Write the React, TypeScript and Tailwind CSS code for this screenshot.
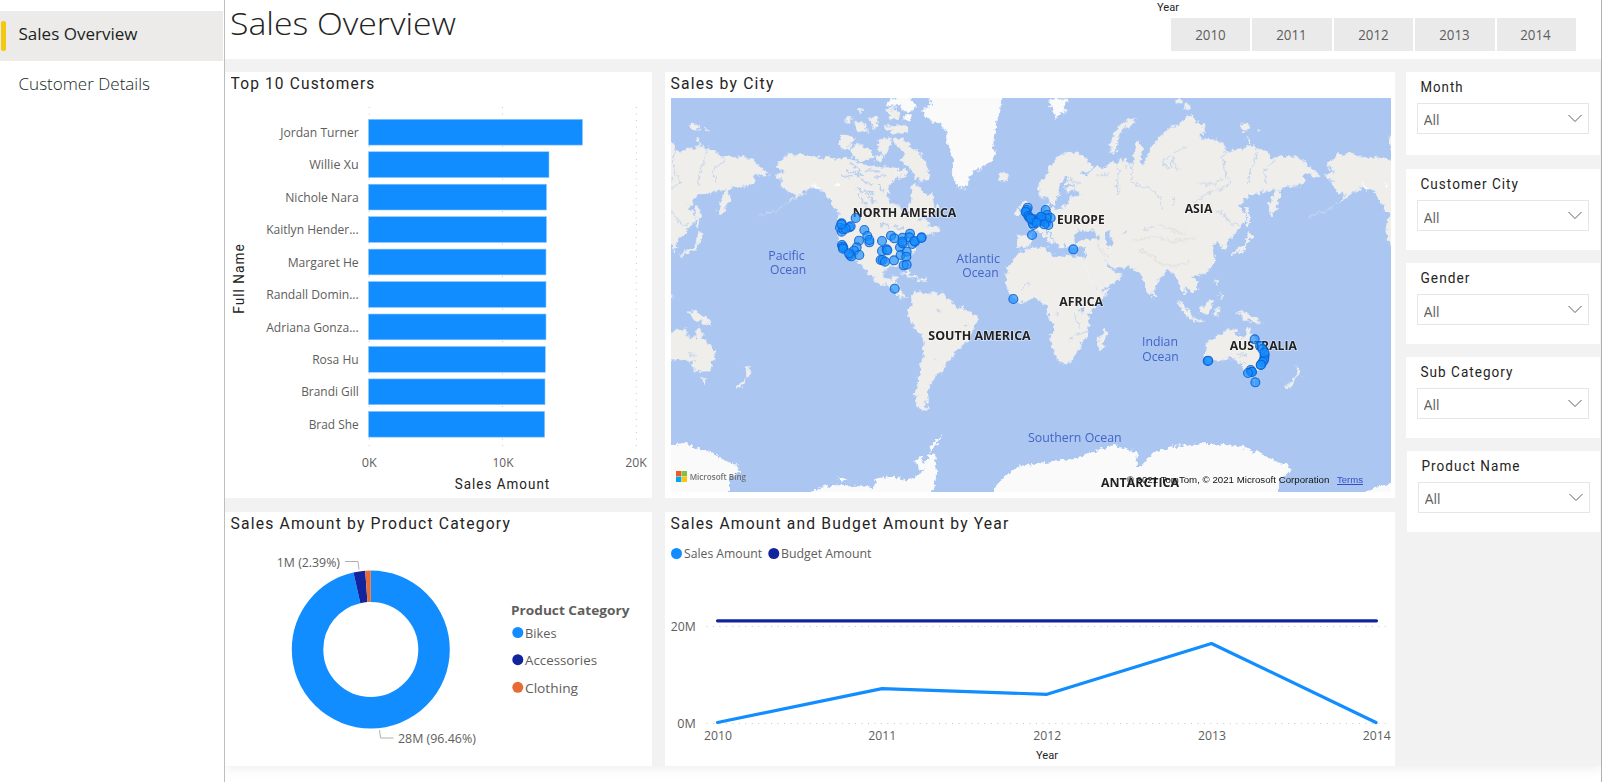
import React from "react";

const UI = '"Open Sans", "Noto Sans", sans-serif';
const DIN = 'Roboto, "Liberation Sans", sans-serif';

type LabelProps = {
  x: number;
  y: number;
  w: number;
  size?: number;
  anchor?: "start" | "middle" | "end";
  color?: string;
  weight?: number;
  font?: string;
  children: string;
};

function Label({ x, y, w, size = 13, anchor = "start", color = "#605e5c", weight = 400, font = UI, children }: LabelProps) {
  return (
    <text
      x={x}
      y={y}
      textAnchor={anchor}
      textLength={w}
      lengthAdjust="spacingAndGlyphs"
      fontSize={size}
      fontWeight={weight}
      fontFamily={font}
      fill={color}
    >
      {children}
    </text>
  );
}

/* Condensed letterforms with open tracking, as in DIN */
function DinLabel({ x, y, w, size = 15, anchor = "start", weight = 400, children }: LabelProps) {
  return (
    <text
      x={x}
      y={y}
      textAnchor={anchor}
      textLength={w}
      lengthAdjust="spacingAndGlyphs"
      letterSpacing={size * 0.075}
      fontSize={size}
      fontWeight={weight}
      fontFamily={DIN}
      fill="#252423"
    >
      {children}
    </text>
  );
}

function CardTitle({ children, width }: { children: string; width: number }) {
  return (
    <h2 className="h-[26px] pl-[6px]">
      <svg width="400" height="26" className="block">
        <DinLabel x={-0.5} y={16.8} w={width} size={17}>{children}</DinLabel>
      </svg>
    </h2>
  );
}

const customers = [
  { name: "Jordan Turner", w: 78.5, end: 582.5 },
  { name: "Willie Xu", w: 49.5, end: 549 },
  { name: "Nichole Nara", w: 73.5, end: 546.5 },
  { name: "Kaitlyn Hender...", w: 92.5, end: 546.5 },
  { name: "Margaret He", w: 71, end: 546 },
  { name: "Randall Domin...", w: 92.5, end: 546 },
  { name: "Adriana Gonza...", w: 92.5, end: 546 },
  { name: "Rosa Hu", w: 46.5, end: 545.3 },
  { name: "Brandi Gill", w: 57.5, end: 545 },
  { name: "Brad She", w: 50, end: 544.7 },
];

function BarChart() {
  return (
    <svg viewBox="225 98 427 400" width="427" height="400" className="block">
      {[369.3, 502.6, 636.3].map((x) => (
        <line key={x} x1={x} x2={x} y1="107" y2="451" stroke="#c8c6c4" strokeWidth="1" strokeDasharray="1 5.5" />
      ))}
      {customers.map((c, i) => {
        const y = 119.3 + i * 32.45;
        return (
          <g key={c.name}>
            <rect x="368.5" y={y} width={c.end - 368.5} height="25.8" fill="#118dff" stroke="#8fc8ff" strokeWidth="0.6" />
            <Label x={358.7} y={y + 17.5} w={c.w} anchor="end">{c.name}</Label>
          </g>
        );
      })}
      <Label x={369.3} y={467} w={15} anchor="middle">0K</Label>
      <Label x={503} y={467} w={21} anchor="middle">10K</Label>
      <Label x={636} y={467} w={21.5} anchor="middle">20K</Label>
      <DinLabel x={502.5} y={489} w={95.5} anchor="middle">Sales Amount</DinLabel>
      <g transform="translate(244 278.5) rotate(-90)">
        <DinLabel x={0} y={0} w={70.5} anchor="middle">Full Name</DinLabel>
      </g>
    </svg>
  );
}

const ASIA_EUROPE =
  "M-38 525L5 525 8 512-5 500 10 488 25 475 40 465 52 450 48 440 55 435 62 447 80 448 100 442 115 430 112 418 125 410 150 408 148 398 118 395 103 385 105 365 118 352 115 345 100 355 85 375 88 400 78 420 70 435 58 425 52 410 30 412 22 378 35 365 50 345 60 320 75 300 95 285 120 280 140 280 160 290 180 310 188 325 170 335 150 330 165 350 180 335 200 320 220 325 240 310 260 310 280 295 300 305 310 320 315 250 328 245 338 270 332 300 342 320 350 290 365 260 385 235 410 210 430 200 450 195 470 165 485 165 495 180 520 195 520 215 505 235 530 238 560 240 585 255 590 280 610 270 640 265 660 255 680 262 710 275 725 295 760 290 790 290 820 300 840 325 868 342 850 348 828 338 822 350 822 370 800 380 770 378 748 388 750 410 745 430 725 465 718 455 718 430 728 410 740 385 700 395 680 402 655 405 635 430 625 440 645 460 648 480 630 500 615 520 605 530 595 540 588 545 592 565 580 575 575 560 565 545 545 555 550 570 555 590 548 620 530 635 505 645 492 650 502 670 500 690 485 698 470 685 462 682 466 706 445 668 430 640 415 632 395 650 380 670 368 700 358 705 350 690 340 655 328 640 310 625 290 620 260 625 235 612 215 590 235 620 245 630 275 640 268 655 240 675 205 695 195 680 175 645 155 605 150 595 165 600 170 575 165 560 140 565 108 560 103 545 98 560 85 558 72 540 60 515 45 505 50 520 70 542 58 548 35 520 20 510 8 525 5 550-5 560-38 560Z";
const AFRICA =
  "M185 303L175 310 165 325 145 345 138 375 138 400 145 425 165 450 190 460 215 445 235 445 250 460 265 465 262 490 275 515 278 540 270 570 280 600 295 635 305 642 335 635 355 600 365 575 380 560 385 530 383 505 395 480 415 460 440 430 445 418 420 425 405 415 390 380 370 345 358 322 330 318 300 320 290 322 270 312 258 302 255 290 225 293 200 297Z";
const NORTH_AMERICA =
  "M345 345L375 335 352 320 365 300 385 280 400 285 420 280 450 290 480 295 510 290 530 300 560 292 590 305 620 318 650 322 690 318 715 325 718 350 700 362 685 380 683 410 690 430 705 435 725 445 738 470 750 460 745 440 755 420 752 400 755 380 775 375 790 395 800 410 815 400 820 425 832 450 820 460 800 468 780 475 770 485 790 478 805 485 800 500 822 505 825 515 800 520 785 535 765 555 760 575 745 590 737 600 748 635 742 645 730 618 700 618 680 622 668 635 672 655 690 658 700 645 714 648 706 672 722 682 726 700 742 712 722 712 705 695 690 678 655 668 630 650 620 635 605 615 590 600 570 590 550 570 535 540 530 510 535 480 542 460 530 450 515 430 500 410 490 392 470 382 450 385 435 395 425 400 410 412 385 428 410 402 395 400 375 390 365 375 370 360 355 355Z";
const SOUTH_AMERICA =
  "M755 710L775 695 800 700 830 698 855 710 870 725 900 745 925 752 950 770 950 785 935 810 925 840 900 860 880 885 868 905 850 918 850 935 830 942 820 960 808 985 800 1005 803 1020 795 1040 805 1052 790 1052 770 1035 765 1005 775 970 780 930 788 890 795 850 785 825 765 805 745 770 745 750 755 735Z";
const AUSTRALIA =
  "M527 850L550 835 575 820 595 805 620 808 618 825 645 835 655 800 665 825 680 845 700 865 705 885 695 915 688 933 665 935 645 930 630 905 600 895 573 900 550 908 532 912 525 875Z";

function World() {
  return (
    <g>
      <g fill="#efeeea" stroke="#ffffff" strokeWidth="1">
        <path d={NORTH_AMERICA} />
        <path d={SOUTH_AMERICA} />
        <path d="M540 225L560 222 582 240 568 262 545 270 538 245Z" />
        <path d="M570 268L596 250 612 262 634 268 640 290 612 305 585 298Z" />
        <path d="M700 238L728 234 750 262 776 272 790 300 806 330 800 362 780 366 762 340 742 318 722 302 735 280 712 262Z" />
        <path d="M582 186L610 190 625 212 600 218Z" />
        <path d="M552 186L572 168 580 174 562 192Z" />
        <path d="M628 175L650 165 656 190 640 205Z" />
        <path d="M672 200L740 195 745 215 700 220Z" />
        <path d="M680 150L700 142 720 160 710 180 690 172Z" />
        <path d="M655 240L690 230 694 255 672 290 655 270Z" />
        <path d="M645 288L665 290 660 304 645 300Z" />
        <path d="M710 335L735 328 740 345 722 352Z" />
        <path d="M590 150L606 145 600 162Z" />
        <path d="M810 505L830 495 838 510 822 522Z" />
        <path d="M720 640L745 644 770 650 765 655 740 650Z" />
        <path d="M775 655L800 655 798 662 778 661Z" />
        <path d="M1015 345L1030 335 1048 345 1040 360 1020 366Z" />
      </g>
      <g fill="#fafafa">
        <path d="M800 100L1025 100 1020 160 1005 200 1000 250 1005 290 985 310 960 325 940 335 925 360 912 386 890 382 882 350 875 320 880 290 865 260 860 215 840 190 800 180 785 150 815 135Z" />
        <path d="M690 114L750 110 770 140 745 160 715 140 680 135Z" />
        <path d="M730 165L752 168 748 180 730 178Z" />
        <path d="M1165 120L1185 114 1228 118 1210 140 1220 156 1200 156 1190 180 1175 150Z" />
      </g>
      <g transform="translate(1110 0)">
        <g fill="#efeeea" stroke="#ffffff" strokeWidth="1">
          <path d={ASIA_EUROPE} />
          <path d={AUSTRALIA} />
          <path d="M245 278L240 255 255 220 270 195 300 180 318 178 300 195 275 210 262 235 260 276Z" />
          <path d="M435 116L456 118 452 130 438 126ZM465 130L482 135 480 150 464 145Z" />
          <path d="M630 192L655 192 660 208 636 212ZM678 205L690 210 682 215ZM650 235L660 238 655 252Z" />
          <path d="M600 585L615 572 635 566 648 548 655 515 668 525 652 550 644 570 612 582 604 590Z" />
          <path d="M645 440L652 440 660 470 657 500 650 500 652 470Z" />
          <path d="M443 720L470 742 490 775 482 778 460 755ZM488 777L520 780 518 786 490 784Z" />
          <path d="M503 748L522 738 538 718 547 730 535 762 510 757Z" />
          <path d="M555 660L563 662 565 678 556 672ZM568 702L580 706 576 716ZM553 745L572 742 562 752 566 768 555 766Z" />
          <path d="M620 755L650 758 678 772 694 792 668 786 640 778 634 765Z" />
          <path d="M664 955L680 955 675 972ZM798 918L815 938 800 952ZM796 948L788 976 768 986 776 970Z" />
          <path d="M-28 440L-15 415-5 430 5 460 12 475-5 480-15 460ZM-42 448L-30 450-34 466-44 464Z" />
          <path d="M369 698L377 706 370 714Z" />
        </g>
        <g fill="#abc6f1">
          <path d="M130 528L150 508 172 518 190 510 192 522 216 532 212 542 190 535 160 540 136 546Z" />
          <path d="M225 515L240 510 238 528 248 540 246 562 234 562 226 540Z" />
          <path d="M280 515L290 512 288 522ZM103 375L128 372 124 380 104 384Z" />
        </g>
        <g fill="none" stroke="#abc6f1" strokeWidth="2.2">
          <path d="M588 250L578 300 585 340 600 370 575 385 540 395 520 410 490 425M500 365L540 375 580 358M310 320L302 345 310 370 360 385 390 410 395 440M680 265L675 300 660 330 655 375M735 300L705 325 700 345 710 370M265 320L262 400M300 315L285 325" />
          <path d="M400 295L430 290 425 325 405 320ZM430 300L445 330M550 452L580 460 600 490 625 495M250 380L275 380M195 350L240 340M340 510L375 500M430 410L430 440M110 360L150 370M120 350L140 400M430 280L470 260" />
        </g>
        <g fill="none" stroke="#e0dfdb" strokeWidth="4">
          <path d="M310 540L370 530 430 545 500 530M330 570L365 585 385 610 440 618 480 600M380 490L430 510 470 525M200 545L220 580 235 590" />
        </g>
        <path d="M625 880l15-2m-10 12l18-3m-15 15l12 5" stroke="#b4caf0" strokeWidth="3" />
      </g>
      <g transform="translate(900 270)">
        <g fill="#efeeea" stroke="#ffffff" strokeWidth="1">
          <path d={AFRICA} />
          <path d="M435 538L441 550 432 585 420 598 411 585 415 562 428 552Z" />
        </g>
        <path d="M185 425L200 400 212 405M355 480L372 485M345 490L352 520 362 535M380 545L340 555 328 570M288 482L292 492" fill="none" stroke="#abc6f1" strokeWidth="2.5" />
        <path d="M358 470l16 0 0 12-12 4z" fill="#abc6f1" />
      </g>
      <path
        d="M560 330L610 350M570 310L600 330 590 350M600 360L640 375M620 330L660 335M590 385L640 400M640 350L680 345M615 400L650 430M545 345L575 350M660 490L690 500M700 500L735 505M655 370L670 400M596 405L620 440"
        fill="none"
        stroke="#abc6f1"
        strokeWidth="4"
      />
      <path d="M830 750l14 4m-25 140l10 4m80-104l12 4" stroke="#b4caf0" strokeWidth="4" />
      <path d="M382 428L350 452 295 468" fill="none" stroke="#dfe7f3" strokeWidth="2" />
      <path d="M455 372l20 8 8 10-20-6zM520 370l16 4-8 10z" fill="#ffffff" />
    </g>
  );
}

const cities: [number, number][] = [
  [545, 490], [545, 515], [540, 503], [568, 502], [572, 499], [550, 508], [557, 506], [544, 493], [587, 474], [613, 510], [622, 528],
  [628, 547], [628, 540], [597, 542], [590, 562], [546, 555], [550, 563], [548, 560], [549, 566], [582, 572], [570, 585], [574, 589],
  [567, 580], [598, 585], [666, 543], [666, 573], [680, 568], [682, 571], [662, 600], [668, 600], [675, 605], [702, 601], [704, 686],
  [693, 527], [703, 535], [728, 533], [750, 521], [748, 532], [720, 562], [728, 550], [727, 545], [757, 552], [765, 545], [763, 543],
  [785, 532], [784, 534], [722, 585], [740, 575], [739, 590], [731, 616], [740, 614],
  [1103, 443], [1099, 458], [1100, 450], [1097, 455], [1105, 468], [1108, 472], [1116, 480], [1122, 478], [1120, 495], [1125, 485],
  [1118, 490], [1140, 475], [1146, 472], [1157, 450], [1162, 465], [1172, 474], [1150, 485], [1158, 488], [1165, 495], [1145, 480],
  [1135, 482], [1160, 475], [1143, 470], [1112, 476], [1153, 493], [1130, 488], [1116, 525], [1240, 568], [1060, 717],
  [1784, 838], [1800, 858], [1807, 867], [1814, 885], [1813, 894], [1812, 900], [1808, 906], [1802, 915], [1803, 914], [1813, 878],
  [1772, 930], [1775, 935], [1776, 936], [1764, 939], [1786, 967], [1643, 903], [1645, 902],
];

type MapLabel = [string, number, number, number];
const continents: MapLabel[] = [
  ["NORTH AMERICA", 578, 471, 311],
  ["SOUTH AMERICA", 805, 840, 307],
  ["EUROPE", 1191, 491, 143],
  ["ASIA", 1574, 458, 83],
  ["AFRICA", 1198, 737, 131],
  ["AUSTRALIA", 1709, 869, 202],
  ["ANTARCTICA", 1323, 1282, 234],
];
const oceans: MapLabel[] = [
  ["Pacific", 325, 600, 109],
  ["Ocean", 330, 643, 109],
  ["Atlantic", 889, 610, 131],
  ["Ocean", 907, 651, 109],
  ["Indian", 1446, 858, 108],
  ["Ocean", 1447, 902, 109],
  ["Southern Ocean", 1104, 1147, 281],
];

function CityMap() {
  return (
    <svg viewBox="33 114 2160 1182" width="720" height="394" className="ml-[6px] block">
      <defs>
        <filter id="coast" filterUnits="userSpaceOnUse" x="-100" y="60" width="2400" height="1300">
          <feTurbulence type="fractalNoise" baseFrequency="0.07" numOctaves="3" seed="4" />
          <feDisplacementMap in="SourceGraphic" scale="24" xChannelSelector="R" yChannelSelector="G" />
        </filter>
      </defs>
      <rect x="33" y="114" width="2160" height="1182" fill="#abc6f1" />
      <g filter="url(#coast)">
        <World />
        <g transform="translate(-1650 0)"><World /></g>
        <g transform="translate(1650 0)"><World /></g>
        <g fill="#fafafa">
          <path d="M0 1158L80 1152 110 1165 160 1178 200 1205 235 1215 240 1235 220 1250 207 1255 207 1320 0 1320Z" />
          <path d="M445 1300L490 1280 540 1275 590 1277 640 1285 650 1255 700 1250 740 1262 780 1245 792 1220 808 1180 825 1185 832 1240 820 1280 808 1310 445 1310Z" />
          <path d="M808 1175L815 1150 850 1125 828 1150 818 1175ZM768 1200L785 1190 795 1225 780 1232ZM530 1252L565 1258 550 1266Z" />
          <path d="M990 1310L1010 1275 1050 1235 1090 1215 1160 1208 1270 1190 1300 1175 1360 1155 1400 1165 1432 1178 1426 1205 1440 1220 1480 1180 1540 1158 1650 1152 1740 1158 1800 1180 1850 1205 1885 1215 1890 1235 1870 1250 1857 1255 1857 1310Z" />
          <path d="M2095 1310L2140 1282 2200 1270 2200 1310Z" />
        </g>
      </g>
      <g style={{ paintOrder: "stroke" }} stroke="#ffffff" strokeOpacity="0.45" strokeWidth="5" strokeLinejoin="round">
        {continents.map(([t, x, y, w]) => (
          <Label key={t} x={x} y={y} w={w} size={38} weight={700} color="#222222">{t}</Label>
        ))}
      </g>
      {oceans.map(([t, x, y, w]) => (
        <Label key={t + x} x={x} y={y} w={w} size={39} color="#4464c8">{t}</Label>
      ))}
      {cities.map(([x, y], i) => (
        <circle key={i} cx={x} cy={y} r="13.4" fill="#118dff" fillOpacity="0.65" stroke="#0a5fd2" strokeOpacity="0.85" strokeWidth="3.4" />
      ))}
      <rect x="48" y="1233" width="16" height="16" fill="#f1592a" />
      <rect x="65" y="1233" width="16" height="16" fill="#80c342" />
      <rect x="48" y="1250" width="16" height="16" fill="#00a9e8" />
      <rect x="65" y="1250" width="16" height="16" fill="#ffc20e" />
      <Label x={89} y={1260} w={169} size={28} weight={600} color="#6f7173">Microsoft Bing</Label>
      <Label x={1400} y={1269} w={608} size={29} font='"Liberation Sans", Arial, sans-serif' color="#111111">
        © 2021 TomTom, © 2021 Microsoft Corporation
      </Label>
      <Label x={2031} y={1269} w={78} size={29} font='"Liberation Sans", Arial, sans-serif' color="#3450c8">Terms</Label>
      <line x1="2031" x2="2109" y1="1273.5" y2="1273.5" stroke="#3450c8" strokeWidth="3" />
    </svg>
  );
}

const slices = [
  { name: "Bikes", share: 96.46, start: 0, color: "#118dff", y: 632.5, w: 31.5 },
  { name: "Accessories", share: 2.39, start: 96.46, color: "#12239e", y: 659.7, w: 72 },
  { name: "Clothing", share: 1.15, start: 98.85, color: "#e66c37", y: 687.3, w: 53 },
];

function Donut() {
  return (
    <svg viewBox="225 538 427 228" width="427" height="228" className="block">
      <g transform="rotate(-90 370.8 649.5)" fill="none" strokeWidth="31.5">
        {slices.map((s) => (
          <circle
            key={s.name}
            cx="370.8"
            cy="649.5"
            r="63.25"
            pathLength="100"
            stroke={s.color}
            strokeDasharray={`${s.share} ${100 - s.share}`}
            strokeDashoffset={-s.start}
          />
        ))}
      </g>
      <path d="M345 561.5h13l1 8M379.5 730l1 8h13" fill="none" stroke="#b3b0ad" strokeWidth="1" />
      <Label x={276.8} y={567} w={63.2}>1M (2.39%)</Label>
      <Label x={398} y={743} w={77.8}>28M (96.46%)</Label>
      <Label x={511} y={615} w={118.5} weight={700}>Product Category</Label>
      {slices.map((s) => (
        <g key={s.name}>
          <circle cx="517.8" cy={s.y} r="5.5" fill={s.color} />
          <Label x={525} y={s.y + 5.3} w={s.w}>{s.name}</Label>
        </g>
      ))}
    </svg>
  );
}

function YearChart() {
  const years: [string, number][] = [["2010", 718], ["2011", 882.3], ["2012", 1047.3], ["2013", 1212], ["2014", 1376.7]];
  return (
    <svg viewBox="665 538 730 228" width="730" height="228" className="block">
      <circle cx="676.5" cy="553.5" r="5.5" fill="#118dff" />
      <Label x={684} y={558.3} w={78}>Sales Amount</Label>
      <circle cx="773.8" cy="553.5" r="5.5" fill="#12239e" />
      <Label x={781} y={558.3} w={90.5}>Budget Amount</Label>
      <g stroke="#c8c6c4" strokeWidth="1" strokeDasharray="1 5.46">
        <line x1="706.5" x2="1387" y1="626.5" y2="626.5" />
        <line x1="706.5" x2="1387" y1="723.5" y2="723.5" />
      </g>
      <Label x={670.7} y={631} w={25}>20M</Label>
      <Label x={677.3} y={728} w={18.5}>0M</Label>
      <g fill="none" strokeWidth="3.2" strokeLinecap="round" strokeLinejoin="round">
        <path d="M717.5 620.8H1376.5" stroke="#12239e" />
        <path d="M717.5 722.5L882 688.6 1047 694.3 1211.5 643.5 1376 722.5" stroke="#118dff" />
      </g>
      {years.map(([t, x]) => (
        <Label key={t} x={x} y={740} w={28} anchor="middle">{t}</Label>
      ))}
      <Label x={1047} y={758.7} w={22} size={11} anchor="middle" font={DIN} color="#252423">Year</Label>
    </svg>
  );
}

function Slicer({ title, width, className, valueY = 15 }: { title: string; width: number; className: string; valueY?: number }) {
  return (
    <section className={`bg-white ${className}`}>
      <svg width="190" height="31" className="block">
        <DinLabel x={14.5} y={20} w={width}>{title}</DinLabel>
      </svg>
      <div className="ml-[11px] flex h-[31px] w-[172px] items-center justify-between border border-[#e6e6e6] pt-[2px] pr-[6px] pl-[6px]">
        <svg width="20" height="20">
          <Label x={-0.3} y={valueY} w={15.7} size={14}>All</Label>
        </svg>
        <svg width="14" height="9" viewBox="0 0 14 9" className="mb-[2px]">
          <path d="M0.5 1L7 7.5 13.5 1" fill="none" stroke="#605e5c" strokeWidth="1" />
        </svg>
      </div>
    </section>
  );
}

export default function App() {
  return (
    <div className="flex h-[782px] w-[1602px] overflow-hidden bg-white">
      <nav className="w-[224px] shrink-0 pt-[11px]">
        <div className="flex h-[50px] w-[223px] items-center bg-[#ecebe9] pl-[1px]">
          <span className="h-[30px] w-[5px] rounded-[2px] bg-[#f2c811]" />
          <svg width="200" height="50">
            <Label x={12.5} y={28.8} w={119} size={17} weight={500} color="#201f1e">Sales Overview</Label>
          </svg>
        </div>
        <div className="h-[50px] pl-[6px]">
          <svg width="200" height="50">
            <Label x={12.5} y={28.8} w={131.5} size={17} weight={360} color="#201f1e">Customer Details</Label>
          </svg>
        </div>
      </nav>
      <main className="flex w-[1378px] flex-col overflow-hidden border-r border-l border-r-[#b0b0b0] border-l-[#bebebe]">
        <header className="relative z-10 flex h-[59px] shrink-0 justify-between bg-white">
          <h1>
            <svg width="300" height="59" className="block">
              <Label x={5} y={34.5} w={226} size={32} weight={360} color="#252423">Sales Overview</Label>
            </svg>
          </h1>
          <div className="mr-[25px] w-[419px]">
            <svg width="60" height="18" className="block">
              <Label x={0} y={11} w={22} size={11} font={DIN} color="#252423">Year</Label>
            </svg>
            <div className="ml-[14px] flex w-[405px] gap-[2px]">
              {["2010", "2011", "2012", "2013", "2014"].map((y) => (
                <div key={y} className="flex h-[33px] flex-1 items-center justify-center bg-[#eaeaea]">
                  <svg width="32" height="20">
                    <Label x={15.5} y={15} w={30.5} size={14} anchor="middle">{y}</Label>
                  </svg>
                </div>
              ))}
            </div>
          </div>
        </header>
        <div className="flex h-[707px] shrink-0 bg-[#f2f2f2] pt-[13px] shadow-[0_2px_12px_rgba(0,0,0,0.08)]">
          <div className="grid grid-cols-[427px_730px] grid-rows-[426px_254px] gap-x-[13px] gap-y-[14px]">
            <section className="bg-white">
              <CardTitle width={145}>Top 10 Customers</CardTitle>
              <BarChart />
            </section>
            <section className="bg-white">
              <CardTitle width={104}>Sales by City</CardTitle>
              <CityMap />
            </section>
            <section className="bg-white">
              <CardTitle width={280.5}>Sales Amount by Product Category</CardTitle>
              <Donut />
            </section>
            <section className="bg-white">
              <CardTitle width={339}>Sales Amount and Budget Amount by Year</CardTitle>
              <YearChart />
            </section>
          </div>
          <aside className="ml-[11px] flex w-[194px] flex-col gap-[13px]">
            <Slicer title="Month" width={43} className="mb-[1px] h-[83px]" />
            <Slicer title="Customer City" width={98.5} className="h-[81px]" valueY={16} />
            <Slicer title="Gender" width={50} className="h-[81px]" valueY={16} />
            <Slicer title="Sub Category" width={93} className="h-[81px]" />
            <Slicer title="Product Name" width={99} className="ml-[1px] h-[81px]" />
          </aside>
        </div>
      </main>
    </div>
  );
}
